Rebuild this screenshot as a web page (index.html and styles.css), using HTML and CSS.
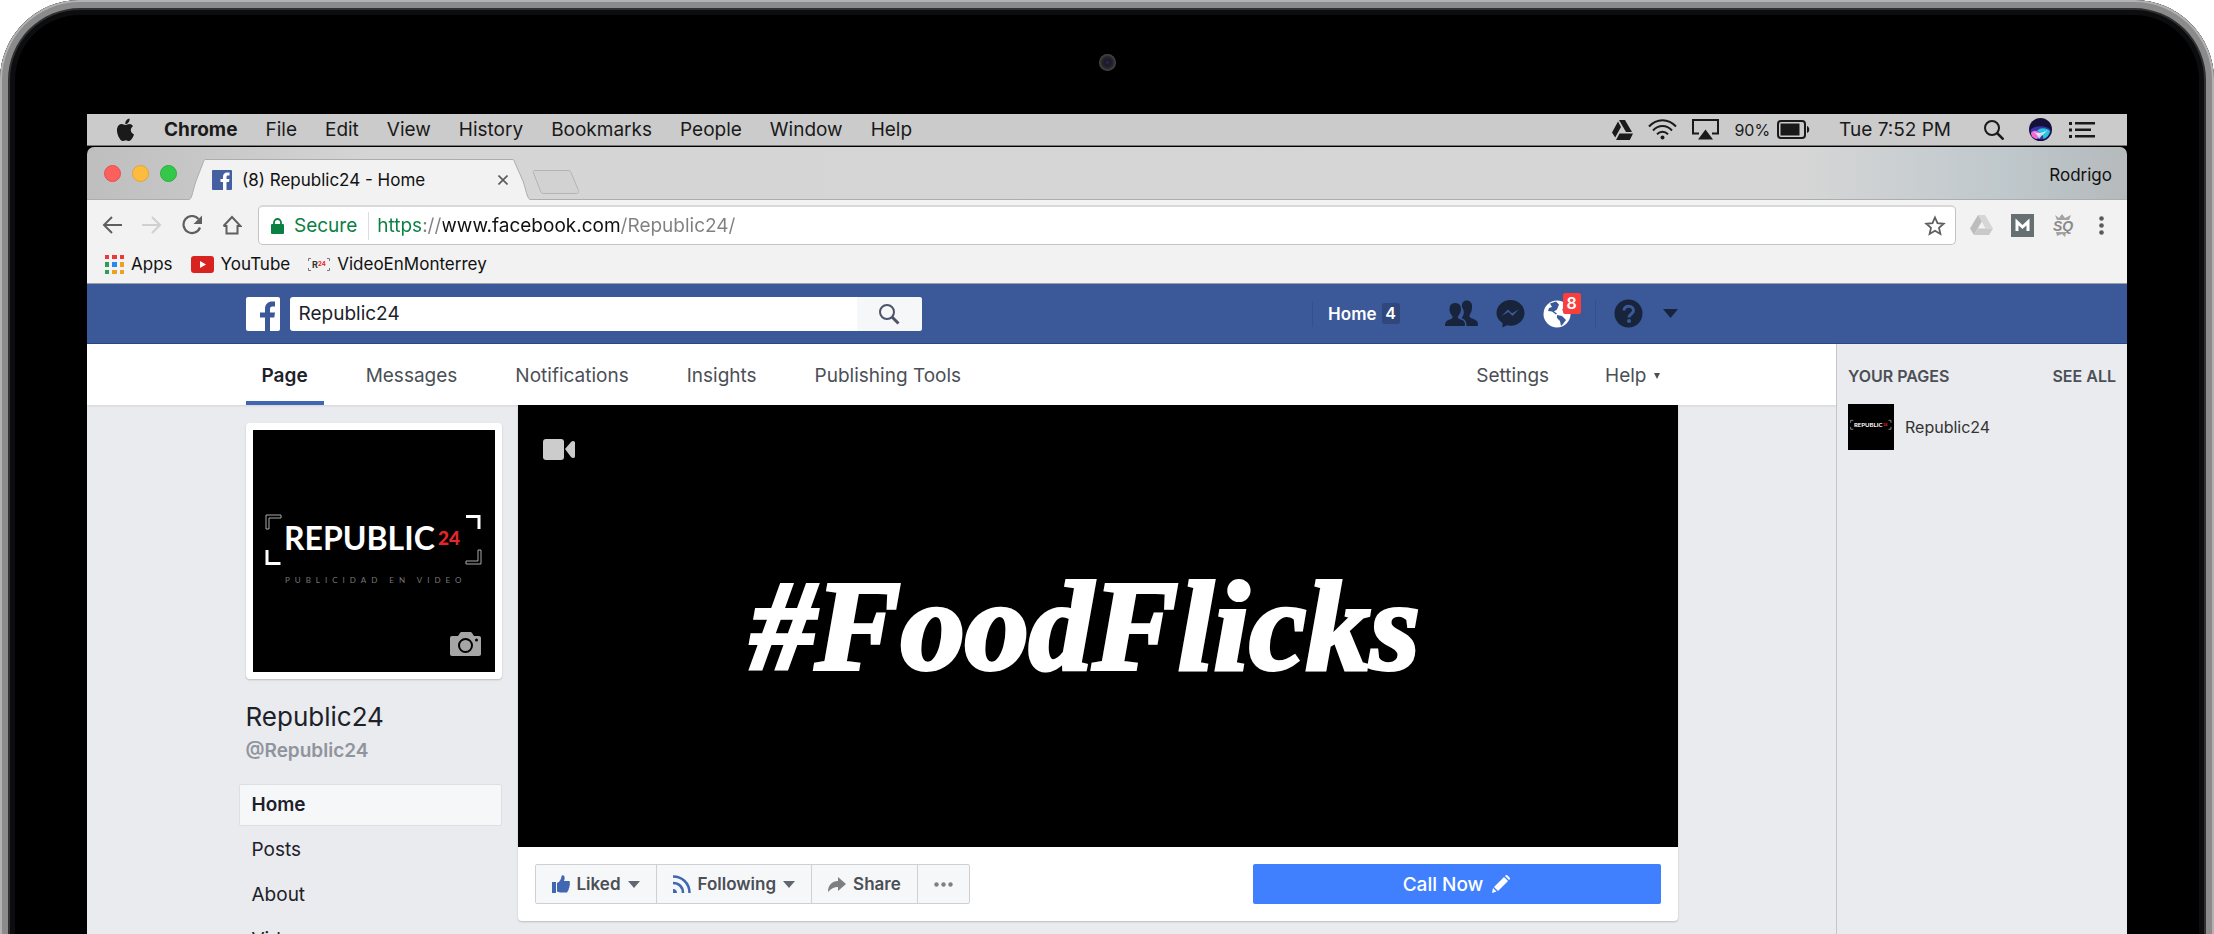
FILE: index.html
```html
<!DOCTYPE html>
<html lang="en">
<head>
    <meta charset="UTF-8">
    <meta name="viewport" content="width=device-width, initial-scale=1.0">
    <title>(8) Republic24 - Home</title>
    <link rel="stylesheet" href="styles.css">
</head>
<body>
    <div class="laptop">
        <div class="camera"></div>
        <div class="screen">

            <!-- Menu bar -->
            <div class="menubar">
                <svg class="apple" width="20" height="24" viewBox="0 0 20 24" fill="#1a1a1a"><path d="M13.600.500c.200 1.600-.400 3-1.200 4-.800 1.100-2 1.700-3.100 1.600-.200-1.400.400-2.900 1.200-3.800C11.300 1.300 12.600.600 13.600.500zM17 8.200c-1.400.900-2.200 2.200-2.200 3.900 0 2 1.100 3.500 3.200 4.400-.500 1.500-1.200 2.900-2.100 4.200-.800 1.200-1.700 2.300-3 2.300-1.200 0-1.600-.800-3.100-.800s-2 .800-3.100.8c-1.300 0-2.300-1.200-3.100-2.400C1.900 18.100.9 14.600 1 12c.1-3.800 2.400-5.900 4.700-5.900 1.400 0 2.600.9 3.800.9 1.100 0 2.400-1 4.100-1 1.300.1 2.600.800 3.400 2.200z"/></svg>
                <nav class="menus">
                    <button class="app-name">Chrome</button>
                    <button>File</button>
                    <button>Edit</button>
                    <button>View</button>
                    <button>History</button>
                    <button>Bookmarks</button>
                    <button>People</button>
                    <button>Window</button>
                    <button>Help</button>
                </nav>
                <div class="status">
                    <svg width="21" height="20" viewBox="0 0 21 20" fill="#1a1a1a"><path d="M7 0h6l7 12h-6zM6 1.500l3 5.500-5.800 10.500L0 12.500zM7.500 13.500H21L17.800 20H4z"/></svg>
                    <svg width="29" height="21" viewBox="0 0 29 21" fill="none" stroke="#1a1a1a" stroke-width="2"><path d="M1 7.500C8.500-1 20.500-1 28 7.500M5 11.500c5.500-6 13.500-6 19 0M9 15.300c3.300-3.300 7.700-3.300 11 0"/><circle cx="14.500" cy="18.500" r="2" fill="#1a1a1a" stroke="none"/></svg>
                    <svg width="27" height="21" viewBox="0 0 27 21"><path d="M7 14.500H1V1h25v13.500h-6" fill="none" stroke="#1a1a1a" stroke-width="2"/><path d="M13.500 10.500L21 20.500H6z" fill="#1a1a1a"/></svg>
                    <div class="battery">
                        <span>90%</span>
                        <svg width="33" height="19" viewBox="0 0 33 19"><rect x="1" y="1" width="27" height="17" rx="3" fill="none" stroke="#1a1a1a" stroke-width="2"/><rect x="3.500" y="3.500" width="19" height="12" fill="#1a1a1a"/><path d="M30 6c3 1 3 6 0 7z" fill="#1a1a1a"/></svg>
                    </div>
                    <span class="clock">Tue 7:52 PM</span>
                    <svg width="20" height="20" viewBox="0 0 20 20" fill="none" stroke="#1a1a1a" stroke-width="2"><circle cx="8" cy="8" r="7"/><path d="M13 13l6.500 6.500" stroke-width="2.500"/></svg>
                    <svg class="siri" width="23" height="23" viewBox="0 0 23 23"><circle cx="11.500" cy="11.500" r="11.500" fill="#15103a"/><path d="M1.500 12C5 7 18 7 21.500 12c0 5-4 9.500-10 9.500S1.500 17 1.500 12z" fill="#3535a8"/><path d="M2 15c3-4 6-2 10 0-2 5-4 6-5 6-3-1-5-3-5-6z" fill="#f06bd6"/><path d="M8 13c4-4 9-3 13 0-1 4-3 7-7 8 1-3-1-6-6-8z" fill="#28c5df"/><path d="M4 14c5 2 10 1 15-2-4 4-6 5-9 9-1-3-2-5-6-7z" fill="#e8f7ff" opacity=".8"/></svg>
                    <svg width="26" height="16" viewBox="0 0 26 16" fill="#1a1a1a"><path d="M0 0h3v3H0zM0 6.500h3v3H0zM0 13h3v3H0zM6 0h20v2.500H6zM6 6.500h16V9H6zM6 13h20v2.500H6z"/></svg>
                </div>
            </div>

            <!-- Tabs -->
            <div class="tabstrip">
                <div class="lights">
                    <span class="light red"></span>
                    <span class="light yellow"></span>
                    <span class="light green"></span>
                </div>
                <div class="tab">
                    <svg class="tab-shape" viewBox="0 0 344 41" preserveAspectRatio="none"><path d="M0 41C4 41 4 34 8 22L15 4c1-3 1-3.500 3-3.500h306c2 0 2 .500 3 3.500l8 18c4 12 4 19 9 19" fill="#f2f2f2" stroke="#adadad"/></svg>
                    <svg width="20" height="20" viewBox="0 0 20 20"><rect width="20" height="20" rx="1" fill="#4460a0"/><path d="M11 20v-8H8.500V9H11V7c0-3 1.500-4.500 4-4.500h2.500v3H16c-1.300 0-1.500.500-1.500 1.700V9h3l-.500 3h-2.500v8z" fill="#fff"/></svg>
                    <span class="tab-title">(8) Republic24 - Home</span>
                    <button aria-label="Close tab"><svg width="10" height="10" viewBox="0 0 10 10" stroke="#5a5a5a" stroke-width="1.600"><path d="M.5.500l9 9M9.500.500l-9 9"/></svg></button>
                </div>
                <button class="new-tab" aria-label="New tab"><svg width="48" height="24" viewBox="0 0 48 24"><path d="M3 .500h33c2 0 2.500 1 3 2l7.500 18c.500 1.500 0 3-2 3H12c-2 0-3-1-3.500-2.500L1.500 3c-.500-1.500 0-2.500 1.500-2.500z" fill="#d2d2d2" stroke="#b4b4b4"/></svg></button>
                <span class="profile-name">Rodrigo</span>
            </div>

            <!-- Toolbar -->
            <div class="toolbar">
                <div class="nav-buttons">
                    <button aria-label="Back"><svg width="20" height="18" viewBox="0 0 20 18" fill="none" stroke="#5f5f5f" stroke-width="2"><path d="M20 9H2M10 1L2 9l8 8"/></svg></button>
                    <button aria-label="Forward"><svg width="20" height="18" viewBox="0 0 20 18" fill="none" stroke="#d0d0d0" stroke-width="2"><path d="M0 9h18M10 1l8 8-8 8"/></svg></button>
                    <button aria-label="Reload"><svg width="20" height="20" viewBox="0 0 20 20"><path d="M16.500 4A8.500 8.500 0 1 0 18 12.500" fill="none" stroke="#5f5f5f" stroke-width="2.200"/><path d="M20 .500V9h-8.500z" fill="#5f5f5f"/></svg></button>
                    <button aria-label="Home page"><svg width="20" height="20" viewBox="0 0 20 20" fill="none" stroke="#5f5f5f" stroke-width="2"><path d="M4.500 10v8.500h11V10M1.500 11L10 2l8.500 9h-3M1.500 11h3"/></svg></button>
                </div>
                <div class="omnibox">
                    <svg width="13" height="16" viewBox="0 0 13 16"><rect y="6" width="13" height="10" rx="1" fill="#0b8043"/><path d="M3 7V4.500a3.500 3.500 0 0 1 7 0V7" fill="none" stroke="#0b8043" stroke-width="1.800"/></svg>
                    <span class="secure">Secure</span>
                    <input class="url" type="text" aria-label="Address" value="https://www.facebook.com/Republic24/">
                    <button aria-label="Bookmark this page"><svg width="22" height="21" viewBox="0 0 22 21" fill="none" stroke="#5f5f5f" stroke-width="1.800"><path d="M11 2.500l2.500 5.700 6.200.600-4.700 4.100 1.400 6.100L11 15.800 5.600 19 7 12.900 2.300 8.800l6.200-.600z"/></svg></button>
                </div>
                <div class="extensions">
                    <button aria-label="Google Drive"><svg width="23" height="20" viewBox="0 0 23 20"><path d="M8 0h7l8 13.500h-7.500z" fill="#d6d6d6"/><path d="M8 0l3.800 6.500L4 20l-4-6.500z" fill="#bdbdbd"/><path d="M8 13.500h15L19 20H4z" fill="#c9c9c9"/></svg></button>
                    <button aria-label="Mail tracker"><svg width="23" height="23" viewBox="0 0 23 23"><rect width="23" height="23" fill="#667070"/><path d="M6 17V8l5.500 5L17 8v9" fill="none" stroke="#fff" stroke-width="3"/></svg></button>
                    <button aria-label="Seo tools"><svg width="22" height="23" viewBox="0 0 22 23"><path d="M3 1l4 3 3-4 3 4 6-3-2 5H5zM4 18h13l-3 1-1 4-3-3-5 2z" fill="#a3a3a3"/><text x="1" y="17" class="sq">SQ</text></svg></button>
                    <button aria-label="Chrome menu"><svg width="5" height="19" viewBox="0 0 5 19" fill="#5a5a5a"><circle cx="2.500" cy="2.500" r="2.300"/><circle cx="2.500" cy="9.500" r="2.300"/><circle cx="2.500" cy="16.500" r="2.300"/></svg></button>
                </div>
            </div>

            <!-- Bookmarks -->
            <div class="bookmarks">
                <a href="#"><svg width="19" height="19" viewBox="0 0 19 19"><path d="M0 0h4v4H0zM7 0h5v4H7zM15 0h4v4h-4z" fill="#ea3b3b"/><path d="M0 7h4v5H0zM0 15h4v4H0z" fill="#2f9e54"/><path d="M7 7h5v5H7z" fill="#2b87f0"/><path d="M15 7h4v5h-4zM7 15h5v4H7zM15 15h4v4h-4z" fill="#f0a020"/></svg>Apps</a>
                <a href="#"><svg width="23" height="17" viewBox="0 0 23 17"><rect width="23" height="17" rx="3" fill="#d8231f"/><path d="M9 5l6 3.500L9 12z" fill="#fff"/></svg>YouTube</a>
                <a href="#"><svg width="22" height="13" viewBox="0 0 22 13"><path d="M.5 3V.500H3M19 .500h2.500V3M.5 10v2.500H3M19 12.500h2.500V10" fill="none" stroke="#777"/><text x="4" y="10" class="mini-r">R</text><text x="10" y="8" class="mini-24">24</text></svg>VideoEnMonterrey</a>
            </div>

            <!-- Facebook header -->
            <header class="fb-header">
                <div class="wrap">
                    <a href="#" aria-label="Facebook"><svg width="34" height="34" viewBox="0 0 34 34"><rect width="34" height="34" rx="2" fill="#fff"/><path d="M19 34V20.500h-5v-5h5v-3.500c0-5 3-7.500 7.500-7.500H29v5h-2.500c-2 0-2.500 1-2.500 2.700v3.300h5l-.700 5H24V34z" fill="#3b5998"/></svg></a>
                    <form class="search">
                        <input type="text" aria-label="Search" value="Republic24">
                        <button type="button" aria-label="Search"><svg width="22" height="22" viewBox="0 0 22 22" fill="none" stroke="#4b5468" stroke-width="2"><circle cx="9" cy="9" r="7"/><path d="M14 14l6.500 6.500" stroke-width="3"/></svg></button>
                    </form>
                    <div class="fb-links">
                        <a href="#" class="fb-home">Home <span class="count">4</span></a>
                        <a href="#" class="friends" aria-label="Friend requests"><svg width="33" height="27" viewBox="0 0 33 27" fill="#18233c"><path d="M0 26c0-5 3-6 6-7 2-1 2-2 1-3.500C4.500 13 4 9 5 6c1.500-4 9-4 10.500 0 1 3 .500 7-2 9.500-1 1.500-1 2.500 1 3.500 3 1 5.500 2 5.500 5.500 0 1-.500 1.500-1.500 1.500z"/><path d="M17 7c-1-9 11-8 10 0 0 3-.500 5-2 7-1.500 3 0 3.500 2 4.500 4 1.500 6 2.500 6 6.500 0 .500-.500 1-1 1H21.500c0-5-1.500-6.500-5-8 3-3 3-7 .500-11z"/></svg></a>
                        <a href="#" aria-label="Messages"><svg width="29" height="29" viewBox="0 0 29 29"><path d="M14.500 1C6.500 1 .5 7 .5 14c0 4.500 2.500 7.500 6 10v4.500l4.500-2.300c9 2.300 17.500-4 17.500-12.200C28.500 7 22.500 1 14.500 1z" fill="#18233c"/><path d="M5.500 17L12 10.500l4 3.800 7-4-6.500 6.800-4-4z" fill="#3b5998"/></svg></a>
                        <a href="#" class="globe" aria-label="Notifications"><svg width="28" height="28" viewBox="0 0 28 28"><circle cx="14" cy="14" r="13.500" fill="#fff"/><path d="M7 3.500l6-2 3 3-2 5-3 2 3 2-1 1-4-3-4-.500L6 8l3-1zM14 15l5 1 4 4-3 4-2 2-1-5-3-3zM20 4l5 5-2 3-4-2 2-3z" fill="#3b5998"/></svg><span class="alert">8</span></a>
                        <a href="#" class="help" aria-label="Quick help"><svg width="29" height="29" viewBox="0 0 29 29"><circle cx="14.500" cy="14.500" r="14" fill="#18233c"/><path d="M10 11.500c0-6 9.500-5.500 9.500 0 0 3.500-4.500 3.500-4.500 7" fill="none" stroke="#3b5998" stroke-width="3"/><circle cx="15" cy="22" r="2" fill="#3b5998"/></svg></a>
                        <a href="#" aria-label="Account settings"><svg width="15" height="9" viewBox="0 0 15 9"><path d="M0 0h15L7.500 9z" fill="#18233c"/></svg></a>
                    </div>
                </div>
            </header>

            <div class="fb-body">
                <div class="main">
                    <nav class="page-nav">
                        <div class="wrap">
                            <a href="#" class="active">Page</a>
                            <a href="#">Messages</a>
                            <a href="#">Notifications</a>
                            <a href="#">Insights</a>
                            <a href="#">Publishing Tools</a>
                            <a href="#" class="settings">Settings</a>
                            <a href="#" class="help-menu">Help <svg width="6" height="6" viewBox="0 0 6 6"><path d="M0 0h6L3 6z" fill="#4b4f56"/></svg></a>
                        </div>
                    </nav>

                    <div class="wrap">
                        <aside class="profile">
                            <div class="picture">
                                <svg class="logo" viewBox="0 0 242 242">
                                    <rect width="242" height="242" fill="#000"/>
                                    <path d="M13 99V85h15v3H16v11z" fill="none" stroke="#aaa"/>
                                    <path d="M213 86.500h13V99M14 120v13.500h13.500" fill="none" stroke="#fff" stroke-width="3"/>
                                    <path d="M225 120v11h-12v3h15v-14z" fill="none" stroke="#aaa"/>
                                    <text x="31" y="120" class="logo-name">REPUBLIC</text>
                                    <text x="185" y="115" class="logo-number">24</text>
                                    <text x="32" y="153" class="logo-tagline">PUBLICIDAD EN VIDEO</text>
                                </svg>
                                <svg class="camera-icon" width="31" height="24" viewBox="0 0 31 24"><path d="M2 4h6l2-3c.500-.700 1-1 2-1h8c1 0 1.500.300 2 1l2 3h5c1.200 0 2 .800 2 2v16c0 1.200-.800 2-2 2H2c-1.200 0-2-.800-2-2V6c0-1.200.800-2 2-2z" fill="#a5a5a5"/><circle cx="15.500" cy="13.500" r="6.500" fill="#a5a5a5" stroke="#000" stroke-width="2"/><circle cx="26.500" cy="8" r="1.500"/></svg>
                            </div>
                            <h1>Republic24</h1>
                            <p class="handle">@Republic24</p>
                            <ul class="side-menu">
                                <li><a href="#" class="active">Home</a></li>
                                <li><a href="#">Posts</a></li>
                                <li><a href="#">About</a></li>
                                <li><a href="#">Videos</a></li>
                            </ul>
                        </aside>

                        <section class="cover-card">
                            <div class="cover">
                                <svg class="video-icon" width="33" height="21" viewBox="0 0 33 21" fill="#ccc"><rect width="21" height="21" rx="3"/><path d="M22 10l6-7c2-2 4-1 4 1v13c0 2-2 3-4 1z"/></svg>
                                <span class="cover-title">#FoodFlicks</span>
                            </div>
                            <div class="actions">
                                <div class="button-group">
                                    <button><svg width="18" height="18" viewBox="0 0 18 18" fill="#4267b2"><path d="M0 7h4v11H0zM5 8c3-1 4-4 4.500-6.500C9.700.300 11-.300 12 .800c1 1.500.700 3.200 0 5.200h5c1.500.500 1 2 .5 2.500.800 1 .500 2-.3 2.500.500 1 .300 2-.5 2.500.300 1-.2 2-.9 2.200 0 1-.5 1.800-1.800 1.800H8L5 16.500z"/></svg>Liked<svg width="12" height="7" viewBox="0 0 12 7"><path d="M0 0h12L6 7z" fill="#616770"/></svg></button>
                                    <button><svg width="18" height="18" viewBox="0 0 18 18" fill="none" stroke="#4267b2" stroke-width="2.500"><path d="M0 1.500C9 1.500 16.500 8 16.500 18M0 8c6 0 10 4 10 10"/><path d="M0 14c3 0 4 2 4 4H0z" fill="#4267b2" stroke="none"/></svg>Following<svg width="12" height="7" viewBox="0 0 12 7"><path d="M0 0h12L6 7z" fill="#616770"/></svg></button>
                                    <button><svg width="18" height="15" viewBox="0 0 18 15"><path d="M0 15C0 8 4 4 10 4V0l8 7-8 7v-4c-4 0-7 1.500-10 5z" fill="#7f7f7f"/></svg>Share</button>
                                    <button aria-label="More"><svg width="19" height="5" viewBox="0 0 19 5" fill="#7f7f7f"><circle cx="2.500" cy="2.500" r="2.200"/><circle cx="9.500" cy="2.500" r="2.200"/><circle cx="16.500" cy="2.500" r="2.200"/></svg></button>
                                </div>
                                <button class="call">Call Now <svg width="18" height="18" viewBox="0 0 18 18" fill="#fff"><path d="M0 18l1-5 3.500 3.500zM2 12L12 2l4 4L6 16zM13 1l1-1c1-.500 4.500 3 4 4l-1 1z"/></svg></button>
                            </div>
                        </section>
                    </div>
                </div>

                <aside class="your-pages">
                    <div class="pages-title">
                        <h2>YOUR PAGES</h2>
                        <a href="#">SEE ALL</a>
                    </div>
                    <a href="#" class="page-link">
                        <svg width="46" height="46" viewBox="0 0 242 242">
                            <rect width="242" height="242" fill="#000"/>
                            <path d="M14 99V86h14M213 86h13v13M14 120v13h14M226 120v13h-13" fill="none" stroke="#aaa" stroke-width="4"/>
                            <text x="31" y="120" class="logo-name">REPUBLIC</text>
                            <text x="185" y="115" class="logo-number">24</text>
                        </svg>
                        Republic24
                    </a>
                </aside>
            </div>
        </div>
    </div>
</body>
</html>
```
FILE: styles.css
```css
* { box-sizing: border-box; }
body { margin: 0; height: 100vh; overflow: hidden; background: #fff; font-family: Inter, "Liberation Sans", sans-serif; font-size: 19px; color: #1d2129; }
button, input { font: inherit; color: inherit; border: none; background: none; padding: 0; margin: 0; }
button { cursor: pointer; }
a { color: inherit; text-decoration: none; }
h1, h2, p, ul { margin: 0; padding: 0; list-style: none; }
svg { display: block; flex: none; }

/* laptop, runs past the bottom of the window */
.laptop { height: calc(100vh + 40px); overflow: hidden; background: #000; border-radius: 80px 80px 0 0; padding: 54px 87px 0; box-shadow: inset 0 0 0 2px #b2b2b2, inset 0 0 0 8px #8b8b8b, inset 0 0 0 10px #303030, inset 0 0 0 15px #0c0d0f; }
.camera { width: 17px; height: 17px; margin: 0 auto 43px; border-radius: 50%; background: radial-gradient(circle, #25256a 0, #1a1a24 25%, #2a2a2a 50%, #4a4a4a 70%, #333 100%); }
.screen { background: #000; }

/* menu bar */
.menubar { display: flex; align-items: center; height: 32px; padding: 0 32px 0 29px; background: #cbcbcb; border-bottom: 1px solid #777; color: #1a1a1a; }
.menus { display: flex; gap: 28px; margin-left: 28px; }
.app-name { font-weight: 700; }
.status { display: flex; align-items: center; gap: 15px; margin-left: auto; }
.battery { display: flex; align-items: center; gap: 7px; font-size: 16px; }
.clock { margin: 0 18px 0 14px; }
.siri { margin: 0 2px 0 10px; }

/* tabs */
.tabstrip { display: flex; align-items: flex-end; height: 53px; margin-top: 1px; background: linear-gradient(90deg, #bebebe 0, #d5d5d5 14%, #d6d6d6 84%, #bfc8cc 94%, #b5babc 100%); border-bottom: 1px solid #adadad; border-radius: 7px 7px 0 0; }
.lights { display: flex; gap: 11px; align-self: center; margin: 0 11px 0 17px; }
.light { width: 17px; height: 17px; border-radius: 50%; }
.red { background: #fc605c; border: 1px solid #e5504c; }
.yellow { background: #fdbc40; border: 1px solid #e2a535; }
.green { background: #34c84a; border: 1px solid #2aae3c; }
.tab { position: relative; display: flex; align-items: center; width: 344px; height: 41px; margin-bottom: -1px; padding: 0 24px; font-size: 17px; color: #111; }
.tab-shape { position: absolute; left: 0; top: 0; width: 100%; height: 100%; }
.tab > :not(.tab-shape) { position: relative; }
.tab-title { flex: 1; margin-left: 10px; }
.new-tab { align-self: center; margin-top: 18px; }
.profile-name { margin: 0 15px 14px auto; font-size: 17px; color: #111; }

/* toolbar */
.toolbar { display: flex; align-items: center; height: 50px; padding: 0 23px 0 15px; background: #f2f2f2; }
.nav-buttons { display: flex; gap: 20px; width: 156px; }
.omnibox { display: flex; align-items: center; flex: 1; height: 40px; padding: 0 9px 0 12px; background: #fff; border: 1px solid #c3c3c3; border-top: 2px solid #d9d9d9; border-radius: 5px; }
.secure { margin-left: 10px; padding-right: 11px; border-right: 1px solid #ddd; line-height: 28px; color: #0b8043; }
.url { flex: 1; min-width: 0; margin-left: 8px; outline: none; color: transparent; background: linear-gradient(90deg, #0b8043 46px, #808080 46px 66px, #111 66px 243px, #808080 243px); background-clip: text; -webkit-background-clip: text; }
.extensions { display: flex; align-items: center; gap: 18px; margin-left: 14px; }
.extensions button:last-child { margin-left: 7px; }
.sq { font: italic 700 14px "Liberation Sans", sans-serif; fill: #8a8a8a; }

/* bookmarks */
.bookmarks { display: flex; align-items: center; gap: 18px; height: 34px; padding: 0 18px 5px; background: #f2f2f2; border-bottom: 1px solid #9b9fa8; font-size: 17px; color: #111; }
.bookmarks a { display: flex; align-items: center; gap: 7px; }
.mini-r { font: 700 9px Inter, sans-serif; fill: #333; }
.mini-24 { font: 700 6px Inter, sans-serif; fill: #e22; }

/* facebook header */
.wrap { display: flex; width: 100%; max-width: 1432px; margin: 0 auto; }
.fb-header { height: 60px; padding-right: 291px; background: #3b5998; border-bottom: 1px solid #29487d; }
.fb-header .wrap { align-items: center; height: 59px; }
.search { display: flex; width: 632px; height: 34px; margin-left: 10px; background: #fff; border-radius: 3px; overflow: hidden; }
.search input { flex: 1; min-width: 0; padding: 0 9px; outline: none; }
.search button { display: flex; align-items: center; justify-content: center; width: 65px; background: #f6f7f9; }
.fb-links { display: flex; align-items: center; gap: 18px; margin-left: auto; }
.fb-home { display: flex; align-items: center; gap: 5px; padding-left: 15px; border-left: 1px solid #345088; line-height: 26px; font-size: 17px; font-weight: 600; color: #fff; }
.count { width: 18px; line-height: 21px; border-radius: 3px; background: #2f477a; text-align: center; font-size: 16px; }
.friends { margin-left: 27px; }
.globe { position: relative; padding-right: 24px; border-right: 1px solid #345088; }
.alert { position: absolute; left: 20px; top: -7px; width: 18px; line-height: 21px; border-radius: 2px; background: #fa3e3e; text-align: center; font-size: 16px; font-weight: 600; color: #fff; }
.help { margin-right: 2px; }

/* page */
.fb-body { display: grid; grid-template-columns: minmax(0, 1fr) 291px; background: #e9ebee; }
.page-nav { height: 61px; background: #fff; box-shadow: 0 1px 2px rgba(0, 0, 0, 0.1); color: #4b4f56; }
.page-nav a { margin-right: 26px; padding: 7px 16px 0; line-height: 50px; border-bottom: 4px solid transparent; }
.page-nav .active { border-color: #4267b2; font-weight: 600; color: #1d2129; }
.page-nav .settings { margin-left: auto; margin-right: 24px; }
.page-nav .help-menu { display: flex; align-items: center; gap: 7px; margin-right: 2px; }

.profile { width: 256px; margin-right: 16px; padding-top: 18px; }
.picture { position: relative; padding: 7px; background: #fff; border-radius: 4px; box-shadow: 0 1px 2px rgba(0, 0, 0, 0.2); }
.logo { width: 100%; height: auto; }
.logo-name { font: 700 32px Lato, sans-serif; fill: #fff; }
.logo-number { font: 900 19px Lato, sans-serif; fill: #e3262b; }
.logo-tagline { font: 400 8px Lato, sans-serif; letter-spacing: 5px; fill: #777; }
.camera-icon { position: absolute; right: 21px; bottom: 23px; }
.profile h1 { margin-top: 20px; font-size: 26px; line-height: 36px; font-weight: 400; }
.handle { line-height: 32px; font-weight: 600; color: #90949c; }
.side-menu { margin: 17px 0 0 -7px; }
.side-menu li { margin-bottom: 3px; }
.side-menu a { display: block; padding: 0 12px; border: 1px solid transparent; border-radius: 2px; line-height: 40px; }
.side-menu .active { background: #f6f7f9; border-color: #dddfe2; font-weight: 600; }

.cover-card { flex: 1; align-self: flex-start; position: relative; background: #fff; border-radius: 0 0 4px 4px; box-shadow: 0 1px 2px rgba(0, 0, 0, 0.2); }
.cover { position: relative; display: flex; align-items: center; justify-content: center; height: 442px; padding-right: 24px; background: #000; }
.video-icon { position: absolute; left: 25px; top: 34px; }
.cover-title { font: italic 700 128px "Liberation Serif", serif; color: #fff; -webkit-text-stroke: 4px #fff; }
.actions { display: flex; justify-content: space-between; padding: 17px; }
.button-group { display: flex; border: 1px solid #ced0d4; border-radius: 2px; background: #f6f7f9; font-size: 17px; font-weight: 600; color: #4b4f56; }
.button-group button { display: flex; align-items: center; justify-content: center; gap: 7px; height: 38px; padding: 0 16px; border-right: 1px solid #ced0d4; }
.button-group button:last-child { border-right: none; }
.call { display: flex; align-items: center; justify-content: center; gap: 9px; width: 408px; height: 40px; border-radius: 2px; background: #4080ff; font-weight: 500; color: #fff; }

/* right column */
.your-pages { padding: 22px 11px 0 11px; border-left: 1px solid #c4c6ca; }
.pages-title { display: flex; justify-content: space-between; line-height: 20px; font-size: 16px; font-weight: 600; color: #4b4f56; }
.pages-title h2 { font-size: 16px; font-weight: 600; }
.page-link { display: flex; align-items: center; gap: 11px; margin-top: 18px; font-size: 16px; color: #333; }
```
